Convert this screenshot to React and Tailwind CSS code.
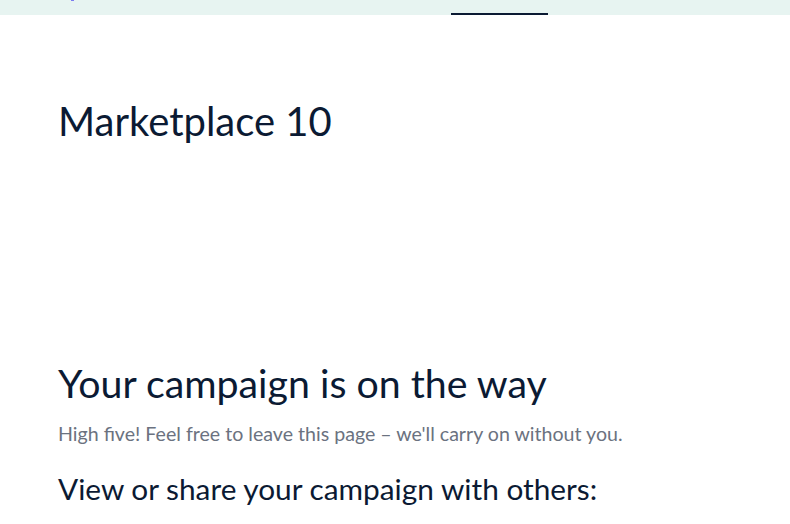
import React from 'react';

const App = () => {
  return (
    <div className="min-h-[524px] bg-white text-[#0b1a33]" style={{ fontFamily: 'Lato, "Open Sans", sans-serif' }}>
      {/* top nav strip, scrolled up */}
      <div className="relative h-[15px] bg-[#e7f4f1]">
        <span className="absolute left-[71px] top-0 h-[1px] w-[3px] bg-[#7b7cf0]" />
        <div className="ml-[451px] flex h-full w-[97px] items-end">
          <div className="h-[2px] w-full bg-[#0b1a33]" />
        </div>
      </div>

      <div className="px-[58px]">
        <h1 className="mt-[82px] text-[40px] leading-[48px] font-normal">Marketplace 10</h1>

        <div className="mt-[214px]">
          <h2 className="text-[39.3px] leading-[48px] font-normal">Your campaign is on the way</h2>
          <p className="mt-[14px] text-[19.6px] leading-[26px] text-[#6b7280]">
            High five! Feel free to leave this page – we'll carry on without you.
          </p>
          <h3 className="mt-[23px] text-[29.8px] leading-[38px] font-normal">View or share your campaign with others:</h3>
        </div>
      </div>
    </div>
  );
};

export default App;
